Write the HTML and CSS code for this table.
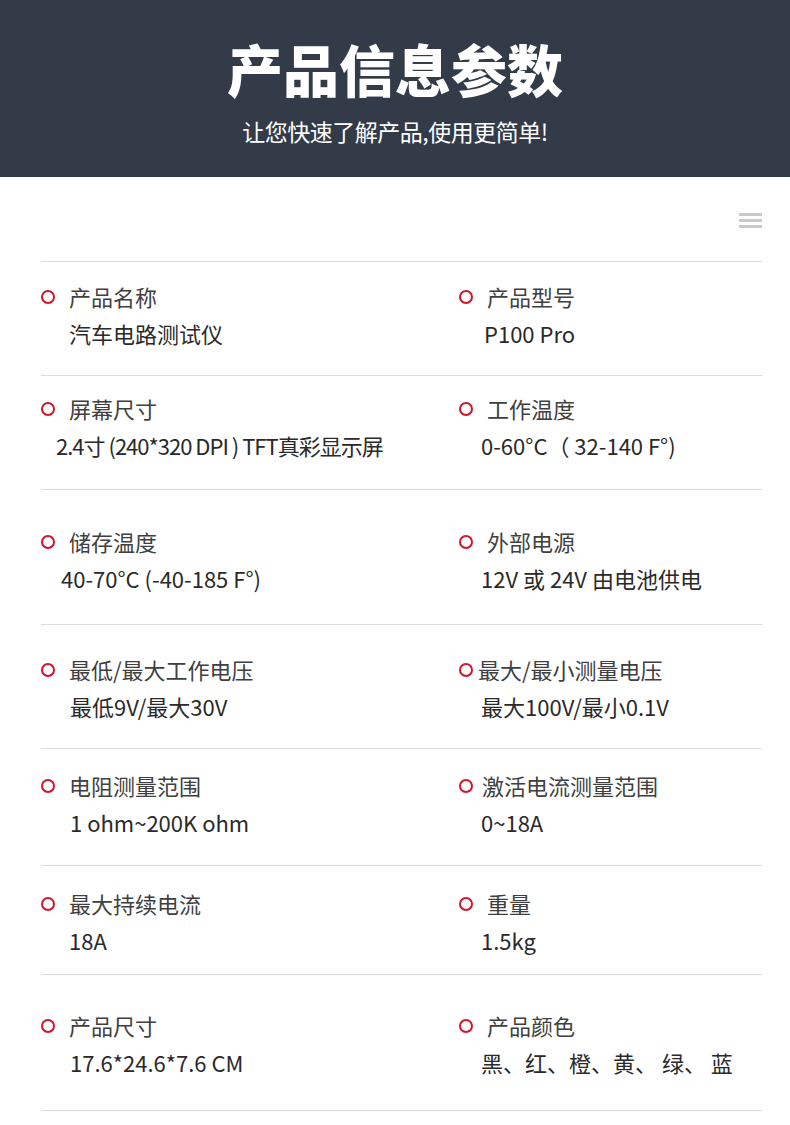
FILE: index.html
```html
<!DOCTYPE html>
<html lang="zh-CN">
<head>
<meta charset="utf-8">
<title>产品信息参数</title>
<link rel="stylesheet" href="styles.css">
</head>
<body>
<header class="hero">
  <h1 class="hero-title">产品信息参数</h1>
  <p class="hero-sub">让您快速了解产品,使用更简单!</p>
</header>
<main class="sheet">
  <div class="toolbar">
    <span class="menu-icon"><i></i><i></i><i></i></span>
  </div>
  <div class="specs">
    <div class="row r1">
      <div class="cell"><div class="label"><span class="dot"></span><span class="txt">产品名称</span></div><div class="val">汽车电路测试仪</div></div>
      <div class="cell"><div class="label"><span class="dot"></span><span class="txt">产品型号</span></div><div class="val v-right3">P100 Pro</div></div>
    </div>
    <div class="row r2">
      <div class="cell"><div class="label"><span class="dot"></span><span class="txt">屏幕尺寸</span></div><div class="val v-left13 condensed">2.4寸 (240*320 DPI ) TFT真彩显示屏</div></div>
      <div class="cell"><div class="label"><span class="dot"></span><span class="txt">工作温度</span></div><div class="val">0-60°C（ 32-140 F°)</div></div>
    </div>
    <div class="row r3">
      <div class="cell"><div class="label"><span class="dot"></span><span class="txt">储存温度</span></div><div class="val v-left8">40-70°C (-40-185 F°)</div></div>
      <div class="cell"><div class="label"><span class="dot"></span><span class="txt">外部电源</span></div><div class="val">12V 或 24V 由电池供电</div></div>
    </div>
    <div class="row r4">
      <div class="cell"><div class="label"><span class="dot"></span><span class="txt">最低/最大工作电压</span></div><div class="val v-right1">最低9V/最大30V</div></div>
      <div class="cell"><div class="label tight"><span class="dot"></span><span class="txt">最大/最小测量电压</span></div><div class="val">最大100V/最小0.1V</div></div>
    </div>
    <div class="row r5">
      <div class="cell"><div class="label"><span class="dot"></span><span class="txt">电阻测量范围</span></div><div class="val v-right1">1 ohm~200K ohm</div></div>
      <div class="cell"><div class="label semi"><span class="dot"></span><span class="txt">激活电流测量范围</span></div><div class="val">0~18A</div></div>
    </div>
    <div class="row r6">
      <div class="cell"><div class="label"><span class="dot"></span><span class="txt">最大持续电流</span></div><div class="val">18A</div></div>
      <div class="cell"><div class="label"><span class="dot"></span><span class="txt">重量</span></div><div class="val">1.5kg</div></div>
    </div>
    <div class="row r7">
      <div class="cell"><div class="label"><span class="dot"></span><span class="txt">产品尺寸</span></div><div class="val v-right1">17.6*24.6*7.6 CM</div></div>
      <div class="cell"><div class="label"><span class="dot"></span><span class="txt">产品颜色</span></div><div class="val">黑、红、橙、黄、 绿、 蓝</div></div>
    </div>
  </div>
</main>
</body>
</html>
```
FILE: styles.css
```css
* { box-sizing: border-box; }
html, body { margin: 0; padding: 0; background: #fff; }
body {
  font-family: "Noto Sans CJK SC", "Noto Sans", sans-serif;
  color: #333;
}
.hero {
  height: 177px;
  background: #333b49;
  color: #fff;
  display: flex;
  flex-direction: column;
  align-items: center;
  padding-top: 33px;
}
.hero-title {
  margin: 0;
  font-size: 56px;
  line-height: 70px;
  font-weight: 900;
  letter-spacing: 0;
}
.hero-sub {
  margin: 15px 0 0;
  font-size: 23px;
  line-height: 26px;
  font-weight: 400;
  letter-spacing: -0.5px;
}
.sheet {
  padding: 0 28px 0 41px;
}
.toolbar {
  height: 84px;
  display: flex;
  justify-content: flex-end;
  padding-top: 36px;
}
.menu-icon {
  width: 23px;
  display: flex;
  flex-direction: column;
  gap: 3px;
}
.menu-icon i {
  display: block;
  height: 3px;
  background: #c9c9c9;
}
.specs {
  border-top: 1px solid #dcdcdc;
}
.row {
  display: grid;
  grid-template-columns: 418px 1fr;
  border-bottom: 1px solid #dcdcdc;
}
.r1 { height: 114px; padding-top: 19px; }
.r2 { height: 114px; padding-top: 17px; }
.r3 { height: 135px; padding-top: 36px; }
.r4 { height: 124px; padding-top: 29px; }
.r5 { height: 117px; padding-top: 21px; }
.r6 { height: 109px; padding-top: 22px; }
.r7 { height: 136px; padding-top: 35px; }
.cell { display: flex; flex-direction: column; gap: 7px; }
.label {
  display: flex;
  align-items: center;
  height: 30px;
  font-size: 22px;
  color: #404040;
}
.dot {
  width: 14px;
  height: 14px;
  border: 2px solid #d0152d;
  border-radius: 50%;
  flex: none;
  margin-right: 14px;
  position: relative;
  top: 1px;
}
.label.tight .dot { margin-right: 5px; }
.label.semi .dot { margin-right: 9px; }
.txt { line-height: 30px; }
.val {
  height: 30px;
  line-height: 30px;
  font-size: 22px;
  color: #2a2a2a;
  padding-left: 22px;
  white-space: nowrap;
}
.val.condensed { letter-spacing: -1px; }
.v-right3 { padding-left: 25px; }
.cell:nth-child(1) .val { padding-left: 28px; }
.cell:nth-child(1) .val.v-left13 { padding-left: 15px; }
.cell:nth-child(1) .val.v-left8 { padding-left: 20px; }
.cell:nth-child(1) .val.v-right1 { padding-left: 29px; }
```
